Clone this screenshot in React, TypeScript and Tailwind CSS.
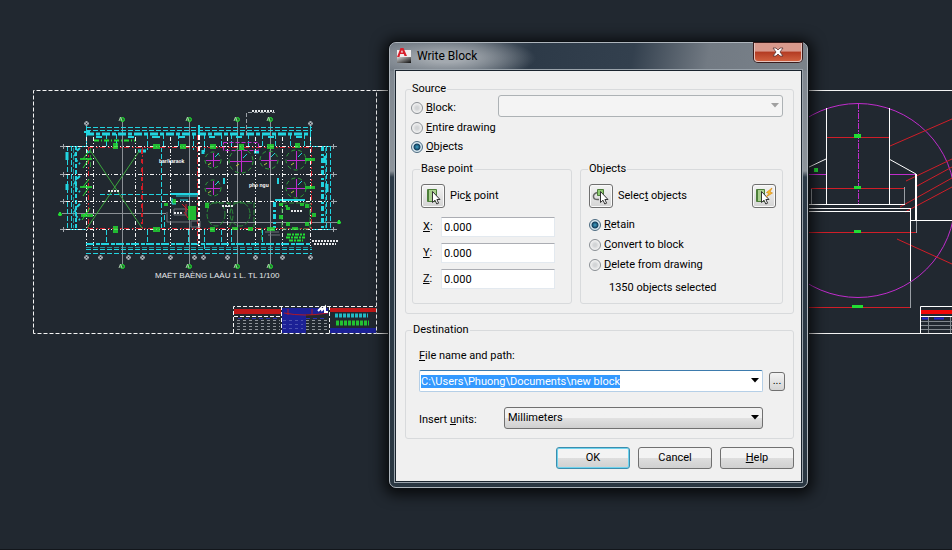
import React, { useEffect, useRef } from 'react';

const CYAN = '#22d4e0';
const GREEN = '#22dd33';
const RED = '#d01e28';
const MAGENTA = '#c02ccc';

type Box = [number, number, number, number];

const treeSpots = [
  [213, 160, 8],
  [241, 161, 12],
  [269, 160, 9],
  [296, 160, 10],
  [213, 188, 8],
  [296, 188, 10],
];

const greenBlobs: Box[] = [
  [113, 143, 5, 6], [153, 144, 7, 5], [180, 144, 6, 5], [210, 144, 6, 5], [239, 144, 5, 6],
  [267, 144, 7, 5], [295, 143, 5, 5], [305, 158, 10, 3], [305, 186, 10, 3], [80, 158, 12, 2],
  [80, 186, 12, 2], [81, 214, 12, 3], [113, 226, 5, 7], [153, 227, 7, 5], [210, 227, 5, 5],
  [232, 227, 6, 3], [248, 227, 5, 4], [267, 227, 8, 4], [188, 206, 8, 14], [172, 199, 4, 5],
  [205, 203, 4, 5], [164, 203, 4, 3], [286, 207, 4, 3], [279, 203, 4, 3], [305, 204, 4, 4],
  [312, 213, 4, 4], [279, 215, 4, 4], [286, 222, 4, 4], [305, 222, 4, 4], [292, 227, 6, 3],
  [285, 205, 3, 2], [300, 203, 4, 3],
];

const planColumns = [93, 135, 170, 227, 255, 282];
const planRows = [146, 174, 201, 229];

const FloorPlan: React.FC = () => (
  <g fill="none">
    {/* axis lines with bubbles */}
    {[122, 189, 237, 270].map((x) => (
      <g key={x}>
        <path d={`M${x + 0.5} 121V264`} stroke="#8b9096" />
        <circle cx={x + 0.5} cy="119.5" r="2" stroke={GREEN} fill="#1d7a2a" />
        <circle cx={x + 0.5} cy="266.5" r="2" stroke={GREEN} fill="#1d7a2a" />
        <path d={`M${x - 3} 121l1.5-4 1.5 4M${x - 3} 268l1.5-4 1.5 4`} stroke="#a8c8a8" />
      </g>
    ))}
    <path d="M62 213.5H166M210 222.5H337" stroke="#8b9096" />
    <path d="M58 214.500h4M60 212v4M337 222.500h4M339 220v4" stroke={GREEN} strokeWidth="2" />

    {/* outer dimension chains */}
    <g stroke={CYAN} strokeDasharray="5 2">
      <path d="M86 127.5H312M86 130.5H312M86 249.5H312M86 253.5H312" />
      <path d="M67.5 146V230M71.5 146V230M326.5 146V230M330.5 146V230" />
      <path d="M106.5 134v12M116.5 134v12M147.5 134v16M163.5 134v14M178.5 134v12M193.5 134v16M204.5 134v18M221.5 134v12M231.5 134v12M248.5 134v12M262.5 134v12M275.5 134v12M290.5 134v12M304.5 134v14" />
      <path d="M106.5 230v15M147.5 230v15M164.5 230v15M188.5 230v15M204.5 230v20M221.5 230v15M231.5 230v15M262.5 230v15" />
      <path d="M100 194.5H197M161.5 147V229M164.5 215v14" />
      <path d="M86 247.5H312M325.5 148V228M73.5 148V228" opacity="0.6" />
    </g>
    <g stroke={CYAN} strokeWidth="3" strokeDasharray="8 2 4 2">
      <path d="M86 134H311" />
      <path d="M322.5 146V230M274.5 202V228" strokeDasharray="5 3 2 2" />
    </g>
    <path d="M86 244H311" stroke={CYAN} strokeWidth="2" strokeDasharray="8 2 4 1" />
    <path d="M86.5 124V146M310.5 124V146M66 146.5h20M66 229.5h20M312 146.5h20M312 229.5h20" stroke={CYAN} />
    <path d="M199 125v10M84 132h6M96 137h6M128 137h6M152 137h8M179 137h6M209 137h6M236 137h6M268 137h6M296 137h6M224 178v6M278 178v6M275 200h30M170 194h28" stroke={CYAN} strokeWidth="2" />
    <path d="M67 152v8M67 184v6M325 156v7M327 184v8M203 150v4M88 150v3M138 151h8M254 152h5" stroke={CYAN} strokeWidth="3" />
    <path d="M80 148q-5 4-5 8t5 8M80 176q-5 4-5 8t5 8M80 204q-5 4-5 8t5 8M76 146V230" stroke={CYAN} strokeWidth="2" strokeDasharray="4 2" />

    {/* walls */}
    <g stroke={RED} strokeDasharray="5 3 2 2">
      <path d="M88 147.5H310M88 228.5H310M142.5 147V229M197.5 135V244M88.5 147V229M311.5 147V229" />
    </g>
    <path d="M142 150V224" stroke={RED} strokeWidth="2" strokeDasharray="4 5" />
    <path d="M94 140.5h42" stroke={GREEN} strokeDasharray="5 2 1 2" strokeWidth="2" />
    <g stroke="#f4f4f4" strokeDasharray="4 2 1 2 1 2">
      {planColumns.map((x) => (
        <path key={x} d={`M${x + 0.5} 137V246`} />
      ))}
      {planRows.map((y) => (
        <path key={y} d={`M66 ${y + 0.5}H330`} />
      ))}
      <path d="M86.5 137V246M310.5 137V246" />
    </g>
    <path d="M199 135V246" stroke="#fff" strokeWidth="2" strokeDasharray="5 2 2 2" />
    <path d="M90 150L142 228M140 150L87 228" stroke="#3aa63c" />

    {/* round white markers */}
    <g stroke="#a4a9af">
      {[86, 100, 128, 142, 170, 194, 203, 227, 255, 282, 310].map((x) => (
        <path key={x} d={`M${x - 2} 257.5h5M${x + 0.5} 255v5`} strokeDasharray="2 1" strokeWidth="2" />
      ))}
      {planRows.map((y) => (
        <path key={y} d={`M60 ${y + 0.5}h6M63.5 ${y - 2}v5M331 ${y + 0.5}h6M333.5 ${y - 2}v5`} />
      ))}
      <path d="M84 123.500h6M86.500 121v5M308 123.500h6M310.500 121v5" strokeWidth="2" strokeDasharray="2 1" />
    </g>

    {/* planting */}
    {treeSpots.map(([cx, cy, r]) => (
      <g key={`${cx}-${cy}`}>
        <circle cx={cx} cy={cy} r={r} stroke="#2fa03c" strokeDasharray="4 3" />
        <path d={`M${cx - r + 1} ${cy + 0.5}h${r * 2 - 2}M${cx + 0.5} ${cy - r + 1}v${r * 2 - 2}`} stroke={MAGENTA} />
        <path d={`M${cx + 2} ${cy - 3}l4-4`} stroke={CYAN} />
        <path d={`M${cx - 5} ${cy + 5}l3-2`} stroke="#b8c840" />
      </g>
    ))}
    <path d="M223.5 142.5H258.5V150.5H223.5Z" stroke={MAGENTA} strokeDasharray="4 2" />
    <g stroke="#2b8a38" strokeDasharray="5 2">
      <ellipse cx="216" cy="214" rx="9" ry="12" />
      <ellipse cx="240" cy="214" rx="10" ry="12" />
      <path d="M228 203q10 12 0 25M254 203v24M205 203h50M261.5 228v14M90.5 148v20" />
      <path d="M282 203h28v26h-28z" />
    </g>
    <path d="M83 159l6-8M83 187l6-8M83 216l6-6M89 159l-6 9M89 187l-6 9M82 220l8-12" stroke={GREEN} />
    {greenBlobs.map(([x, y, w, h]) => (
      <rect key={`${x}-${y}`} x={x} y={y} width={w} height={h} fill={GREEN} opacity="0.8" />
    ))}
    <path d="M287 234.500h18M286 237.500h19M289 240.500h14" stroke={GREEN} strokeWidth="2" strokeDasharray="4 1 2 1" />
    <path d="M167 212v10h22M174 209h12v6h-12zM191 221h9v6h-9zM265 232h14M268 235h12" stroke="#6c7278" />
    <path d="M172 198v6h4M180 200h8M176 196h22" stroke={CYAN} />
    <path d="M182 204l6 6M186 204v8M184 212l4 6" stroke={RED} />
    <path d="M246.5 135V112.5H275" stroke="#9aa0a6" strokeDasharray="4 2" />

    {/* tiny annotations */}
    <g stroke="#e4e6e8" strokeWidth="2" strokeDasharray="2 1">
      <path d="M252 111h22M222 206h11M291 211h11M108 191h11M174 213h9" />
      <path d="M312 241h26M314 244h22" />
    </g>
    <g fill="#fff" fontFamily="Liberation Sans, sans-serif" fontWeight="bold">
      <text x="159" y="163" fontSize="5">bar/karaok</text>
      <text x="249" y="187" fontSize="5">pho ngu</text>
    </g>
    <text x="155" y="278" fontSize="8" fill="#e8eaec" fontFamily="Liberation Sans, sans-serif">
      MAËT BAÈNG LAÀU 1 L. TL 1/100
    </text>
  </g>
);

const TitleBlock: React.FC = () => (
  <g fill="none">
    <rect x="282" y="308" width="24" height="25" fill="#1c2196" />
    <rect x="306" y="308" width="22" height="6" fill="#1c2196" />
    <rect x="330" y="328" width="46" height="5" fill="#1c2196" />
    <rect x="234" y="309" width="47" height="5" fill="#c01818" />
    <rect x="330" y="308" width="46" height="4" fill="#c01818" />
    <path d="M284 313q20 4 44 0M288 309v6M312 309v6" stroke="#b01828" />
    <path d="M318 311l3-3 1 2 3-3v5h3" stroke="#fff" strokeWidth="2" />
    <path d="M283 320.5H303M283 324.5H303M283 328.5H303" stroke="#4c52b0" strokeDasharray="3 3" />
    <path d="M335 315.5h33" stroke={CYAN} strokeWidth="4" strokeDasharray="3 1" opacity="0.85" />
    <path d="M336 323h33" stroke={GREEN} strokeWidth="5" strokeDasharray="3 1" opacity="0.85" />
    <path d="M237 320.5H280M237 323.5H280M237 326.5H280M237 329.5H280M306 320.5H327M306 323.5H327M306 326.5H327M306 329.5H327" stroke="#8d9298" strokeDasharray="3 3" />
    <path d="M238 318.5H280M306 318.5H327" stroke="#2a30b0" strokeDasharray="4 3" />
    <path d="M233.5 333V306.5H376M281.5 306V333M329.5 306V333M234 316.5H281" stroke="#f4f4f4" strokeDasharray="4 2" />
  </g>
);

const SectionDetail: React.FC = () => (
  <g fill="none">
    <path d="M800 90.5H952M800 333.5H952" stroke="#f4f4f4" />
    <circle cx="858" cy="200.5" r="97" stroke={MAGENTA} />
    <path d="M858.5 103V205" stroke={MAGENTA} strokeDasharray="6 1 2 1" />
    <path d="M807 174.5H826M889 174.5H916" stroke={MAGENTA} />
    <g stroke={RED}>
      <path d="M826 137.5H889M811 188.5H904M807 232.5H916M807 307.5H910" />
      <path d="M890 146L952 119M906 181L952 159M917 186L952 167M900 207L952 178M905 212L952 187M897 239L952 264" />
    </g>
    <path d="M811.5 189V204M904.5 187V204M916.5 220V233M910.5 280V308" stroke="#9a9fa5" />
    <g stroke="#fff">
      <path d="M826.5 108V204M889.5 108V204M807 204.5H905M807 208.5H911M807 211.5H911" />
      <path d="M910.5 209V281M911 220.5H952M889 159L916 174M807 168L826 159" />
    </g>
    <path d="M916 174V220" stroke="#fff" strokeWidth="2" />
    <g fill={GREEN}>
      <rect x="854" y="134" width="7" height="4" />
      <rect x="854" y="186" width="7" height="3" />
      <rect x="854" y="230" width="7" height="3" />
      <rect x="852" y="305" width="11" height="3" />
      <rect x="814" y="168" width="4" height="4" />
    </g>
    <path d="M920.5 333V306.5H952M920 316.5H952" stroke="#fff" />
    <rect x="921" y="310" width="31" height="4" fill="#f00808" />
    <path d="M922 318.5h6M934 318.5h10" stroke="#2024c8" strokeWidth="2" />
    <path d="M921 321.5h31M921 325.5h31M921 329.5h31M928.5 317v16M950.5 317v16" stroke="#80868c" />
  </g>
);

const DrawingCanvas: React.FC = () => (
  <svg className="absolute top-0 left-0" width="952" height="550" viewBox="0 0 952 550" aria-hidden="true">
    <path d="M33.5 333.5V90.5H376.5V333.5H33.5" fill="none" stroke="#f4f4f4" strokeDasharray="4 2" />
    <path d="M377 90.5H392M377 333.5H392" stroke="#f4f4f4" />
    <FloorPlan />
    <TitleBlock />
    <SectionDetail />
  </svg>
);

const AppIcon: React.FC = () => (
  <svg width="16" height="16" viewBox="0 0 16 16" aria-hidden="true">
    <defs>
      <linearGradient id="iconBase" x1="0" y1="0" x2="1" y2="1">
        <stop offset="0" stopColor="#d8d8d8" />
        <stop offset="1" stopColor="#0c0c0c" />
      </linearGradient>
    </defs>
    <rect x="1" y="2" width="14" height="13" fill="#f1eeee" />
    <rect x="1" y="9" width="14" height="6" fill="url(#iconBase)" />
    <path d="M1 9L4.500 0H7.500L11 8H8.500L7.800 6H4.200L3.500 9ZM4.800 4.500H7L6 2Z" fill="#d8202c" fillRule="evenodd" />
  </svg>
);

const Cursor: React.FC = () => (
  <path d="M9.500 5.500V16.500L12 14.200L13.800 18L15.600 17.200L13.900 13.500H17Z" fill="#fff" stroke="#333" />
);

const PickIcon: React.FC = () => (
  <svg width="20" height="20" viewBox="0 0 20 20" aria-hidden="true">
    <path d="M4.500 3.500H13.500V15.500H4.500Z" fill="#a9d08e" stroke="#4d7f3a" />
    <path d="M5.500 4V15" stroke="#4d7f3a" />
    <Cursor />
  </svg>
);

const SelectIcon: React.FC = () => (
  <svg width="20" height="20" viewBox="0 0 20 20" aria-hidden="true">
    <path d="M6.500 3.500H12.500V9.500H6.500Z" fill="#8fc973" stroke="#4d7f3a" />
    <path d="M6 6.500Q2 8 2.500 11T8 13.500" fill="none" stroke="#666" strokeWidth="1.500" />
    <Cursor />
  </svg>
);

const QuickSelectIcon: React.FC = () => (
  <svg width="20" height="20" viewBox="0 0 20 20" aria-hidden="true">
    <path d="M2.500 3.500H10.500V15.500H2.500Z" fill="#a9d08e" stroke="#4d7f3a" />
    <path d="M3.500 4V15" stroke="#4d7f3a" />
    <g transform="translate(-2 0)">
      <Cursor />
    </g>
    <path d="M18 2L12.500 6.500L15 7.500L12 11L18.500 7L16 6Z" fill="#fbc02d" stroke="#d98a14" strokeWidth="0.700" />
  </svg>
);

const Arrow: React.FC<{ className: string }> = ({ className }) => (
  <svg className={`pointer-events-none absolute top-2 ${className}`} width="8" height="5" viewBox="0 0 8 5" aria-hidden="true">
    <path d="M0 0H8L4 4.500Z" fill="currentColor" />
  </svg>
);

interface GroupProps {
  title: string;
  className?: string;
  children: React.ReactNode;
}

const Group: React.FC<GroupProps> = ({ title, className = '', children }) => (
  <fieldset className={`min-w-0 rounded-[3px] border border-[#d8dadc] ${className}`}>
    <legend className="h-3 px-px leading-3">{title}</legend>
    {children}
  </fieldset>
);

interface RadioProps {
  name: string;
  hotkey: string;
  label: string;
  checked?: boolean;
  className?: string;
}

const Radio: React.FC<RadioProps> = ({ name, hotkey, label, checked = false, className = '' }) => (
  <label className={`flex items-center gap-[3px] ${className}`}>
    <input
      type="radio"
      name={name}
      defaultChecked={checked}
      className="size-3 appearance-none rounded-full border border-[#8a8f94] bg-[radial-gradient(circle,#d2d4d6_20%,#f4f4f4_70%)] checked:border-[#4b6a80] checked:bg-[radial-gradient(circle,#3fa3c8_0%,#123f5e_42%,#d9e8f0_56%)]"
    />
    <span>
      <u>{hotkey}</u>
      {label}
    </span>
  </label>
);

const iconButton =
  'flex size-6 items-center justify-center rounded-[3px] border border-[#707070] bg-linear-to-b from-[#f4f4f4] to-[#d4d4d4] shadow-[inset_0_0_0_1px_#fafafa]';
const pushButton =
  'h-[22px] w-[74px] rounded-[3px] border bg-linear-to-b from-[#f3f3f3] from-50% via-[#dedede] via-50% to-[#d0d0d0]';

const CoordinateField: React.FC<{ axis: string }> = ({ axis }) => (
  <label className="flex h-5 items-center">
    <span className="w-[19px] pl-px">
      <u>{axis}</u>:
    </span>
    <input
      type="text"
      defaultValue="0.000"
      className="h-5 w-[114px] border border-[#e3e9ef] border-t-[#abadb3] bg-white px-0.5"
    />
  </label>
);

const WriteBlockDialog: React.FC = () => {
  const pathRef = useRef<HTMLInputElement>(null);

  useEffect(() => {
    pathRef.current?.select();
  }, []);

  return (
    <div
      role="dialog"
      aria-labelledby="dialog-title"
      className="absolute top-[42px] left-[389px] w-[419px] rounded-[7px] border border-[#aeb5bc] bg-[linear-gradient(#7b838c_0,#8d949b_128px,#2c3a47_134px,#2a3742_100%)] px-[6px] pb-[6px] shadow-[0_0_0_1px_#0c1014,0_2px_14px_5px_rgba(0,0,0,0.75)]"
    >
      {/* title bar */}
      <div className="-mx-[6px] flex h-7 items-start justify-between rounded-t-[6px] bg-[radial-gradient(ellipse_90px_22px_at_56px_15px,#a3a9af_20%,transparent_100%),linear-gradient(100deg,#6a737d_0,#56616d_20%,#2d3a48_34%,#33404e_58%,#727a83_76%,#7b838b_100%)] pr-[5px] pl-[6px]">
        <div className="flex h-[26px] items-center gap-1">
          <AppIcon />
          <h1 id="dialog-title" className="pl-px text-[12px] text-black">Write Block</h1>
        </div>
        <button
          type="button"
          aria-label="Close"
          className="flex h-[19px] w-12 items-center justify-center rounded-b-[4px] border border-t-0 border-[#e6c4be] bg-linear-to-b from-[#d8998c] from-45% via-[#b33a22] via-50% to-[#d0603f] shadow-[0_0_0_1px_#3a1c1c]"
        >
          <svg width="12" height="10" viewBox="0 0 12 10" aria-hidden="true">
            <path d="M1 1H4L6 3L8 1H11L8 5L11 9H8L6 7L4 9H1L4 5Z" fill="#fff" stroke="#5a3434" strokeWidth="0.800" />
          </svg>
        </button>
      </div>

      <form
        onSubmit={(e) => e.preventDefault()}
        className="bg-[#f0f0f0] pt-3 pr-[7px] pb-3 pl-[9px] shadow-[0_0_0_1px_#1a242e,0_0_0_2px_#9aa3ab]"
      >
        <Group title="Source" className="pr-[10px] pb-[9px] pl-[5px]">
          <div className="flex h-6 items-end">
            <Radio name="source" hotkey="B" label="lock:" className="h-[22px] w-[87px]" />
            <div className="relative h-full flex-1">
              <select
                disabled
                aria-label="Block name"
                className="h-[22px] w-full appearance-none rounded-[3px] border border-[#adb2b5] bg-[#f4f4f4]"
              />
              <Arrow className="right-1 text-[#a0a0a0]" />
            </div>
          </div>
          <Radio name="source" hotkey="E" label="ntire drawing" className="h-[18px]" />
          <Radio name="source" hotkey="O" label="bjects" checked className="h-5" />

          <div className="mt-[6px] flex gap-2 pl-px">
            <Group title="Base point" className="w-[160px] px-2 pt-[9px] pb-[14px] [&>legend]:-ml-px">
              <div className="flex items-center gap-[5px]">
                <button type="button" aria-label="Pick point" className={iconButton}>
                  <PickIcon />
                </button>
                <span>
                  Pic<u>k</u> point
                </span>
              </div>
              <div className="mt-[9px] flex flex-col gap-[6px] pl-px">
                <CoordinateField axis="X" />
                <CoordinateField axis="Y" />
                <CoordinateField axis="Z" />
              </div>
            </Group>

            <Group title="Objects" className="flex-1 pt-[9px] pr-[6px] pl-2 [&>legend]:-ml-px">
              <div className="flex items-center gap-[5px]">
                <button type="button" aria-label="Select objects" className={iconButton}>
                  <SelectIcon />
                </button>
                <span className="flex-1">
                  Selec<u>t</u> objects
                </span>
                <button type="button" aria-label="Quick select" className={iconButton}>
                  <QuickSelectIcon />
                </button>
              </div>
              <div className="mt-[7px]">
                <Radio name="objects" hotkey="R" label="etain" checked className="h-5" />
                <Radio name="objects" hotkey="C" label="onvert to block" className="h-5" />
                <Radio name="objects" hotkey="D" label="elete from drawing" className="h-5" />
              </div>
              <p className="mt-[3px] pl-5 leading-5">1350 objects selected</p>
            </Group>
          </div>
        </Group>

        <Group title="Destination" className="mt-[10px] pr-2 pb-[9px] pl-[13px] [&>legend]:-ml-[7px]">
          <label htmlFor="file-path" className="mt-3 block leading-4">
            <u>F</u>ile name and path:
          </label>
          <div className="mt-[6px] flex items-center gap-[6px]">
            <div className="relative flex-1">
              <input
                id="file-path"
                ref={pathRef}
                type="text"
                defaultValue="C:\Users\Phuong\Documents\new block"
                className="block h-[22px] w-full rounded-[2px] border border-[#b5cfe7] border-t-[#3d7bad] bg-white px-px leading-4 outline-none selection:bg-[#3399ff] selection:text-white"
              />
              <Arrow className="right-1 text-black" />
            </div>
            <button type="button" aria-label="Browse" className="h-[19px] w-4 rounded-[3px] border border-[#707070] bg-linear-to-b from-[#f3f3f3] to-[#d4d4d4] leading-3">
              ...
            </button>
          </div>
          <div className="mt-[15px] flex items-center pr-[22px]">
            <label htmlFor="units" className="w-[85px] pt-1">
              Insert <u>u</u>nits:
            </label>
            <div className="relative flex-1">
              <select
                id="units"
                className="block h-[22px] w-full appearance-none rounded-[3px] border border-[#707070] bg-linear-to-b from-[#f2f2f2] from-50% via-[#e2e2e2] via-50% to-[#cfcfcf] px-[3px]"
              >
                <option>Millimeters</option>
              </select>
              <Arrow className="right-1 text-black" />
            </div>
          </div>
        </Group>

        <div className="mt-2 flex justify-end gap-2">
          <button type="submit" className={`${pushButton} border-[#3c8dad] shadow-[inset_0_0_0_1px_#6fd3ee]`}>
            OK
          </button>
          <button type="button" className={`${pushButton} border-[#707070]`}>
            Cancel
          </button>
          <button type="button" className={`${pushButton} border-[#707070]`}>
            <u>H</u>elp
          </button>
        </div>
      </form>
    </div>
  );
};

export default function App() {
  return (
    <main className="relative min-h-screen overflow-hidden border-b border-[#12161b] bg-[#212830] font-['Roboto','Liberation_Sans',sans-serif] text-[11px] leading-4 text-black">
      <DrawingCanvas />
      <WriteBlockDialog />
    </main>
  );
}
